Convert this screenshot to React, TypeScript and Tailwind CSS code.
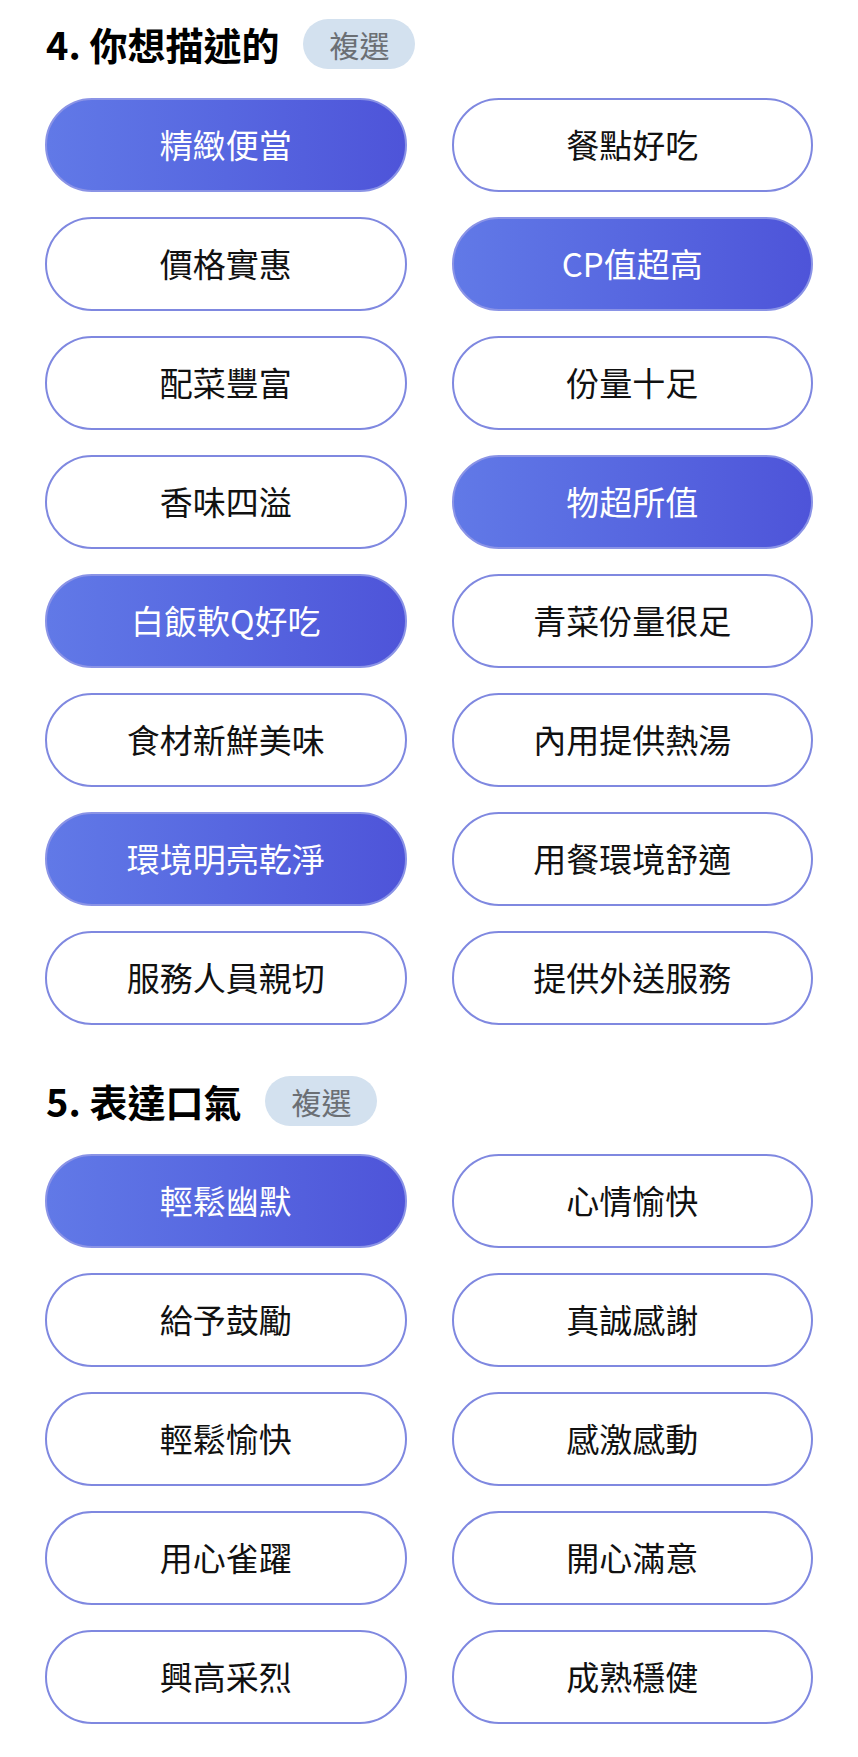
import React from "react";

const font = { fontFamily: '"Noto Sans CJK TC", "Noto Sans", sans-serif' };

type Opt = { label: string; on?: boolean };

const s1: Opt[] = [
  { label: "精緻便當", on: true },
  { label: "餐點好吃" },
  { label: "價格實惠" },
  { label: "CP值超高", on: true },
  { label: "配菜豐富" },
  { label: "份量十足" },
  { label: "香味四溢" },
  { label: "物超所值", on: true },
  { label: "白飯軟Q好吃", on: true },
  { label: "青菜份量很足" },
  { label: "食材新鮮美味" },
  { label: "內用提供熱湯" },
  { label: "環境明亮乾淨", on: true },
  { label: "用餐環境舒適" },
  { label: "服務人員親切" },
  { label: "提供外送服務" },
];

const s2: Opt[] = [
  { label: "輕鬆幽默", on: true },
  { label: "心情愉快" },
  { label: "給予鼓勵" },
  { label: "真誠感謝" },
  { label: "輕鬆愉快" },
  { label: "感激感動" },
  { label: "用心雀躍" },
  { label: "開心滿意" },
  { label: "興高采烈" },
  { label: "成熟穩健" },
];

function Heading({ title }: { title: string }) {
  return (
    <div className="flex items-center h-[50px]">
      <h2 className="text-[38px] font-bold text-black leading-none pl-[1px]">{title}</h2>
      <span className="ml-[24px] h-[50px] px-[26px] rounded-full bg-[#d3e1ef] text-[#6b6f74] text-[30px] leading-[50px]">
        複選
      </span>
    </div>
  );
}

function Grid({ items }: { items: Opt[] }) {
  return (
    <div className="grid grid-cols-2 gap-x-[45px] gap-y-[25px]">
      {items.map((o) =>
        o.on ? (
          <div
            key={o.label}
            className="h-[94px] rounded-full bg-gradient-to-r from-[#6179e7] to-[#4e54d9] text-white text-[33px] flex items-center justify-center border-2 border-[#8a93e6]"
          >
            {o.label}
          </div>
        ) : (
          <div
            key={o.label}
            className="h-[94px] rounded-full bg-white border-2 border-[#7f88e0] text-[#111] text-[33px] flex items-center justify-center"
          >
            {o.label}
          </div>
        )
      )}
    </div>
  );
}

export default function App() {
  return (
    <div style={font} className="w-[858px] bg-white px-[45px] pt-[19px] pb-[34px]">
      <Heading title="4. 你想描述的" />
      <div className="mt-[29px]">
        <Grid items={s1} />
      </div>
      <div className="mt-[51px]">
        <Heading title="5. 表達口氣" />
      </div>
      <div className="mt-[28px]">
        <Grid items={s2} />
      </div>
    </div>
  );
}
